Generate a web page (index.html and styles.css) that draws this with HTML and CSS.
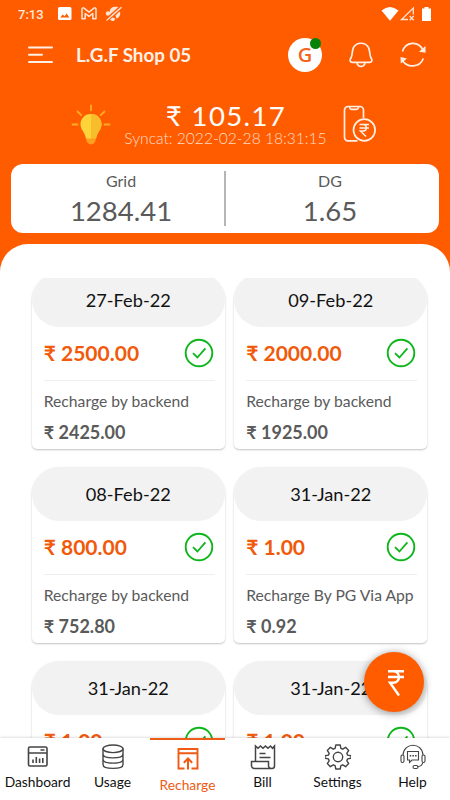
FILE: index.html
```html
<!DOCTYPE html>
<html lang="en">
<head>
    <meta charset="UTF-8">
    <meta name="viewport" content="width=device-width, initial-scale=1.0">
    <title>L.G.F Shop 05 - Recharge</title>
    <link rel="stylesheet" href="styles.css">
</head>
<body>
    <!-- shared icons -->
    <svg class="defs" width="0" height="0">
        <symbol id="check" viewBox="0 0 30 30">
            <circle cx="15" cy="15" r="13.3" fill="none" stroke="#0fb51c" stroke-width="1.9"/>
            <path d="M9 15.2l4.4 4.3 8-9.2" fill="none" stroke="#0fb51c" stroke-width="1.8"/>
        </symbol>
    </svg>

    <div class="app">
        <div class="status-bar">
            <span class="time">7:13</span>
            <svg class="status-left" width="64" height="16" viewBox="0 0 64 16">
                <path fill="#fff" fill-rule="evenodd" d="M1.5 1h10.500a1.500 1.500 0 0 1 1.500 1.500v10a1.500 1.500 0 0 1-1.500 1.500H1.500A1.500 1.500 0 0 1 0 12.500v-10A1.500 1.500 0 0 1 1.500 1zM2.300 11.500h9L8.700 7.600 6.500 10.300 4.800 8.500z"/>
                <path fill="none" stroke="#ffe3d3" stroke-width="1.500" stroke-linejoin="round" d="M24 12.800V3.600q0-2.500 2-1.500l5 4 5-4q2-1 2 1.500v9.200h-3.200V7.500L31 10.400l-3.800-2.900v5.300z"/>
                <g fill="#ffe3d3">
                    <path d="M51.500 6.500Q52 1 56.500.8q4-.6 6 1.200L54 10.500l-3-.5z"/>
                    <circle cx="50" cy="7.500" r="2.200"/>
                    <path d="M57.500 9.500l4-4q2 2-1 6l-2 1zM52 13.500l2.500-2 3 1-1.500 2.500h-2z"/>
                </g>
                <path d="M47.500 13.500L62.500.3" stroke="#ff5c00" stroke-width="1.600"/>
                <path d="M48.500 14.500L63.500 1.300" stroke="#ffe3d3" stroke-width="1.200"/>
            </svg>
            <svg class="status-right" width="52" height="16" viewBox="0 0 52 16">
                <path fill="#fff" d="M.5 4.500Q9 -2.500 17.500 4.500L9 14.800z"/>
                <path fill="none" stroke="#ffe3d3" stroke-width="1.300" d="M27 13.500h-6.500L32.300 2v6.500"/>
                <path stroke="#ffe3d3" stroke-width="1.300" d="M28.700 10l4 4.200m0-4.200l-4 4.200"/>
                <path fill="#fff" d="M43.500 1h4v1.500H50V15h-9V2.500h2.500z"/>
            </svg>
        </div>

        <header class="topbar">
            <svg class="menu" width="26" height="18" viewBox="0 0 26 18">
                <path d="M1 1.500h23M1 8.700h13M1 16h23" stroke="#fff0e6" stroke-width="2" stroke-linecap="round"/>
            </svg>
            <h1>L.G.F Shop 05</h1>
            <div class="grid-badge">G<span class="dot"></span></div>
            <svg class="bell" width="24" height="26" viewBox="0 0 24 26" fill="none" stroke="#fff0e6" stroke-width="1.700">
                <path d="M3.500 20.300C.8 20.300.6 18 1.700 16.500 4 13 2.500 9.500 4.500 5.500 7.500-.2 16.500-.2 19.500 5.500c2 4 .5 7.500 2.800 11 1.100 1.500.9 3.800-1.800 3.800z"/>
                <path d="M8 20.500c.5 5.200 7.500 5.200 8 0"/>
            </svg>
            <svg class="sync" width="26" height="26" viewBox="0 0 26 26" fill="none" stroke="#fff0e6" stroke-width="1.700">
                <path d="M2.500 9.500C5.500-.3 18-1.800 23 8M1.800 17.500c5 9 18 8.500 21.500-1"/>
                <path fill="#fff0e6" stroke="none" d="M25.500 4v6.800l-6.500-1zM.5 15l6.500 1.600L.8 21.500z"/>
            </svg>
        </header>

        <section class="balance">
            <svg width="40" height="42" viewBox="0 0 40 42">
                <path d="M20 1.500v4.800M6.500 7.500l3.800 3.700M33.500 7.500l-3.800 3.700M1.500 20.500h5M33.500 20.500h5" stroke="#ffad1f" stroke-width="1.800" stroke-linecap="round"/>
                <path fill="#ffd43b" d="M20 10C13.500 10 9.500 15 9.500 20.300c0 6 4.800 8 5.500 14.700h10c.7-6.700 5.500-8.700 5.500-14.700C30.500 15 26.500 10 20 10z"/>
                <path fill="#f7bd2b" d="M20 10c6.500 0 10.500 5 10.500 10.300 0 6-4.800 8-5.500 14.700h-5z"/>
                <path fill="#ff9f20" d="M15.300 34.500h9.400c.3 8-9.700 8-9.400 0z"/>
            </svg>
            <div class="balance-text">
                <div class="amount">₹ 105.17</div>
                <div class="synced">Syncat: 2022-02-28 18:31:15</div>
            </div>
            <svg class="pay" width="33" height="38" viewBox="0 0 33 38" fill="none" stroke="#fff0e6" stroke-width="1.700">
                <path d="M14.500 35.800H5a3.500 3.500 0 0 1-3.500-3.500V5A3.500 3.500 0 0 1 5 1.500h12A3.500 3.500 0 0 1 20.500 5v8"/>
                <path d="M6.500 2q.3 2.300 2 2.300h5q1.700 0 2-2.300"/>
                <circle cx="21.300" cy="25" r="10.800"/>
                <path d="M16.500 19.500h9.500M16.500 23h9.500M17 19.500h3c4.500 0 4.500 6.500 0 6.500h-2.500l5.500 5.500" stroke-width="1.500"/>
            </svg>
        </section>

        <section class="meters">
            <div class="meter"><span>Grid</span><b>1284.41</b></div>
            <div class="meter"><span>DG</span><b>1.65</b></div>
        </section>

        <main class="sheet">
            <div class="list">
                <article class="card">
                    <h2>27-Feb-22</h2>
                    <div class="paid">₹ 2500.00<svg><use href="#check"/></svg></div>
                    <p>Recharge by backend</p>
                    <div class="net">₹ 2425.00</div>
                </article>
                <article class="card">
                    <h2>09-Feb-22</h2>
                    <div class="paid">₹ 2000.00<svg><use href="#check"/></svg></div>
                    <p>Recharge by backend</p>
                    <div class="net">₹ 1925.00</div>
                </article>
                <article class="card">
                    <h2>08-Feb-22</h2>
                    <div class="paid">₹ 800.00<svg><use href="#check"/></svg></div>
                    <p>Recharge by backend</p>
                    <div class="net">₹ 752.80</div>
                </article>
                <article class="card">
                    <h2>31-Jan-22</h2>
                    <div class="paid">₹ 1.00<svg><use href="#check"/></svg></div>
                    <p>Recharge By PG Via App</p>
                    <div class="net">₹ 0.92</div>
                </article>
                <article class="card">
                    <h2>31-Jan-22</h2>
                    <div class="paid">₹ 1.00<svg><use href="#check"/></svg></div>
                </article>
                <article class="card">
                    <h2>31-Jan-22</h2>
                    <div class="paid">₹ 1.00<svg><use href="#check"/></svg></div>
                </article>
            </div>
            <button class="fab" aria-label="Recharge now">
                <svg width="18" height="28" viewBox="0 0 18 28" fill="none" stroke="#fff" stroke-width="2.400">
                    <path d="M1 2.200h16M1 8h16M1.500 2.200H6c8 0 8 11.600 0 11.600H3L12 26.500"/>
                </svg>
            </button>
        </main>

        <nav class="tabs">
            <a class="tab">
                <svg width="22" height="24" viewBox="0 0 22 24" fill="none" stroke="#444" stroke-width="1.600">
                    <rect x="1.500" y="2" width="18.500" height="19" rx="1.500"/>
                    <path d="M1.500 8h18.500M13.500 5h4M6 18v-3.500M9.300 18v-6M12.600 18v-4.500M15.800 18v-5"/>
                </svg>
                Dashboard
            </a>
            <a class="tab">
                <svg width="22" height="26" viewBox="0 0 22 26" fill="none" stroke="#444" stroke-width="1.400">
                    <ellipse cx="11" cy="4.800" rx="10" ry="3.800"/>
                    <path d="M1 4.800v15.700c0 5.200 20 5.200 20 0V4.800M1 10c0 5.200 20 5.200 20 0M1 15.200c0 5.200 20 5.200 20 0"/>
                </svg>
                Usage
            </a>
            <a class="tab active">
                <svg width="22" height="24" viewBox="0 0 22 24" fill="none" stroke="#ed5b14" stroke-width="1.900">
                    <path d="M7.500 21.500H1.500V2h19v19.500h-6M1.500 6.300h19"/>
                    <path d="M11 22.500V12.500M6.800 15.800L11 11.500l4.200 4.300" stroke-width="2"/>
                </svg>
                Recharge
            </a>
            <a class="tab">
                <svg width="26" height="26" viewBox="0 0 26 26" fill="none" stroke="#444" stroke-width="1.500">
                    <path d="M5.500 17.500V2l2.500 2.300L10.500 2 13 4.300 15.500 2 18 4.300 20.500 2l2 2.300 2-2.300v20a2.500 2.500 0 0 1-2.500 2.500H4.500A3 3 0 0 1 1.500 21v-3.500h17V21a3 3 0 0 0 3 3.500M9.500 9.500h6M9.500 13.500h11"/>
                </svg>
                Bill
            </a>
            <a class="tab">
                <svg width="26" height="26" viewBox="0 0 26 26" fill="none" stroke="#444" stroke-width="1.400" stroke-linejoin="round">
                    <circle cx="13" cy="13" r="4.700"/>
                    <path d="M10.800 1h4.400l.7 3.400 1.800.8 2.900-1.900 3.100 3.100-1.900 2.900.8 1.800 3.400.7v2.400l-3.400.7-.8 1.800 1.900 2.900-3.100 3.100-2.900-1.900-1.800.8-.7 3.400h-4.400l-.7-3.400-1.800-.8-2.900 1.900-3.100-3.100 1.900-2.900-.8-1.800-3.400-.7v-2.400l3.400-.7.8-1.800-1.900-2.900 3.100-3.100 2.900 1.900 1.800-.8z"/>
                </svg>
                Settings
            </a>
            <a class="tab">
                <svg width="26" height="26" viewBox="0 0 26 26" fill="none" stroke="#444" stroke-width="1.100">
                    <path d="M3 11C4-2 22-2 23 11M22.800 18.500q-.8 4-5.500 4.300"/>
                    <rect x="1" y="11" width="3" height="7.500" rx="1.500"/>
                    <rect x="22" y="11" width="3" height="7.500" rx="1.500"/>
                    <rect x="13" y="21.500" width="5" height="3" rx="1.500"/>
                    <path d="M7.500 7.500h11v8.500H12l-2.500 2.500V16h-2z"/>
                    <path d="M9.700 11.700h1.500m1.200 0h1.500m1.200 0h1.500" stroke-width="1.500"/>
                </svg>
                Help
            </a>
        </nav>
    </div>
</body>
</html>
```
FILE: styles.css
```css
* {
    box-sizing: border-box;
}
body {
    margin: 0;
    font-family: Lato, "Noto Sans", sans-serif;
    background: #ff5c00;
}
h1, h2, p {
    margin: 0;
}
svg {
    display: block;
    flex: none;
}
.defs {
    position: absolute;
}
.app {
    display: flex;
    flex-direction: column;
    width: 450px;
    height: 800px;
    overflow: hidden;
    background: #ff5c00;
}

/* header */
.status-bar {
    display: flex;
    align-items: center;
    height: 28px;
    padding: 0 17px 0 18px;
}
.time {
    width: 40px;
    font: 500 13px Roboto, sans-serif;
    color: #ffe9dc;
}
.status-right {
    margin-left: auto;
}
.topbar {
    display: flex;
    align-items: center;
    height: 54px;
    padding: 0 24px 0 28px;
}
.topbar h1 {
    flex: 1;
    margin-left: 22px;
    font-size: 18.8px;
    font-weight: 700;
    line-height: 24px;
    color: #fff0e6;
}
.grid-badge {
    position: relative;
    width: 34px;
    height: 34px;
    border-radius: 50%;
    background: #fff;
    color: #f4631e;
    font: 600 20px/34px "Open Sans", sans-serif;
    text-align: center;
}
.dot {
    position: absolute;
    top: 0;
    right: 1px;
    width: 11px;
    height: 11px;
    border-radius: 50%;
    background: #078207;
}
.bell {
    margin-left: 27px;
}
.sync {
    margin-left: 27px;
}
.balance {
    display: flex;
    align-items: flex-start;
    height: 82px;
    padding: 22px 74px 0 71px;
}
.balance-text {
    flex: 1;
    text-align: center;
    color: #fff;
}
.amount {
    margin-right: 2px;
    font-size: 27.5px;
    line-height: 23px;
    letter-spacing: 1.4px;
}
.synced {
    margin: 1px 3px 0 0;
    font-size: 15.6px;
    font-weight: 300;
    line-height: 20px;
    color: #ffdcc7;
    white-space: nowrap;
}
.pay {
    margin-top: 1px;
}
.meters {
    display: flex;
    height: 69px;
    margin: 0 11px;
    padding: 7px 0;
    border-radius: 12px;
    background: #fff;
}
.meter {
    width: 213px;
    padding-left: 7px;
    text-align: center;
    color: #5a5a5a;
}
.meter + .meter {
    width: 215px;
    padding: 0 5px 0 0;
    border-left: 2px solid #b5b5b5;
}
.meter span {
    display: block;
    font-size: 16px;
    line-height: 20px;
}
.meter b {
    display: block;
    font-size: 27.5px;
    font-weight: 400;
    line-height: 40px;
}

/* recharge history */
.sheet {
    position: relative;
    flex: 1;
    min-height: 0;
    margin-top: 11px;
    padding-top: 34px;
    border-radius: 28px 28px 0 0;
    background: #fff;
}
.list {
    display: grid;
    grid-template-columns: 193px 193px;
    grid-auto-rows: 176px;
    gap: 18px 9.5px;
    align-content: start;
    justify-content: center;
    height: 460px;
    padding-left: 9px;
    overflow: hidden;
}
.card {
    margin-top: -5px;
    margin-bottom: 5px;
    border-radius: 27px 27px 5px 5px;
    background: #fff;
    box-shadow: 0 1px 2px rgba(0, 0, 0, .24);
}
.card h2 {
    height: 54px;
    border-radius: 27px;
    background: #f2f2f2;
    font-size: 18.2px;
    font-weight: 400;
    line-height: 54px;
    text-align: center;
    color: #111;
}
.paid {
    display: flex;
    align-items: center;
    justify-content: space-between;
    height: 54px;
    margin: 0 10px 0 12px;
    padding: 0 1px 2px 0;
    border-bottom: 1px solid #eee;
    font-size: 21px;
    font-weight: 700;
    color: #f05a0a;
}
.paid svg {
    width: 30px;
    height: 30px;
}
.card p {
    margin: 10px 0 0 12px;
    font-size: 15.7px;
    line-height: 20px;
    color: #5a5a5a;
    white-space: nowrap;
}
.net {
    margin: 9px 0 0 12px;
    font-size: 18px;
    font-weight: 700;
    line-height: 24px;
    color: #5a5a5a;
}
.fab {
    position: absolute;
    right: 26px;
    bottom: 26px;
    display: flex;
    align-items: center;
    justify-content: center;
    width: 60px;
    height: 60px;
    padding: 2px 0 0 3px;
    border: 0;
    border-radius: 50%;
    background: #ff5c00;
    box-shadow: 0 1px 8px rgba(0, 0, 0, .4);
}

/* bottom navigation */
.tabs {
    position: relative;
    display: grid;
    grid-template-columns: repeat(6, 75px);
    height: 62px;
    background: #fff;
    box-shadow: 0 -1px 2px rgba(0, 0, 0, .12);
}
.tab {
    display: flex;
    flex-direction: column;
    align-items: center;
    padding-top: 6px;
    font-size: 13.8px;
    line-height: 18px;
    color: #111;
}
.tab svg {
    height: 26px;
    margin-bottom: 3px;
}
.tab.active {
    border-top: 2px solid #ed5b14;
    color: #ed5b14;
}
.tab.active svg {
    margin-bottom: 4px;
}
```
